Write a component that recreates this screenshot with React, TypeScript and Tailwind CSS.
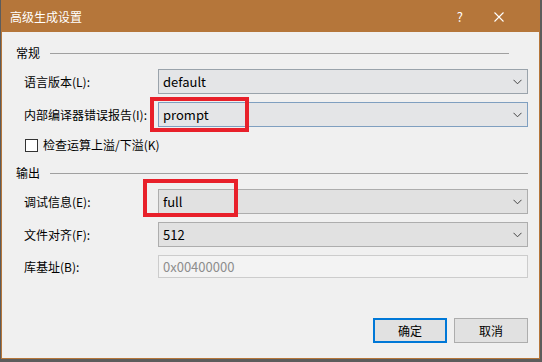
import React from "react";

const font = { fontFamily: '"Noto Sans CJK SC", "Noto Sans", sans-serif' };

function Chevron() {
  return (
    <svg className="absolute right-[5px] top-1/2 -translate-y-1/2" width="9" height="6" viewBox="0 0 9 6">
      <path d="M0.5 0.8 L4.5 4.8 L8.5 0.8" fill="none" stroke="#444" strokeWidth="1" />
    </svg>
  );
}

function Select({ value, border, bg }: { value: string; border: string; bg: string }) {
  return (
    <div className={`relative w-[370px] h-[25px] border ${border} ${bg} flex items-center pl-[4px] text-[13px] text-black`}>
      <span>{value}</span>
      <Chevron />
    </div>
  );
}

function Row({ label, children }: { label: string; children: React.ReactNode }) {
  return (
    <div className="flex items-center mt-[8px] pl-[22px]">
      <div className="w-[134px] text-[12px] text-black leading-none">{label}</div>
      {children}
    </div>
  );
}

function Header({ text, lineW, mt }: { text: string; lineW: string; mt: string }) {
  return (
    <div className={`flex items-center h-[16px] pl-[14px] ${mt}`}>
      <span className="text-[12px] text-black w-[34px] leading-none">{text}</span>
      <div className={`h-px bg-[#a0a0a0] ${lineW}`} />
    </div>
  );
}

export default function App() {
  return (
    <div className="relative w-[542px] h-[362px] bg-[#5c5c5c] pl-[1px] overflow-hidden" style={font}>
      <div className="w-[539px] h-[359px] border border-[#b5763a] bg-[#f0f0f0] flex flex-col">
        <div className="h-[31px] bg-[#b5763a] flex items-center text-white text-[12px] pl-[8px] shrink-0">
          <span>高级生成设置</span>
          <span className="ml-auto mr-[31px] text-[13px]">?</span>
          <svg className="mr-[35px]" width="10" height="10" viewBox="0 0 10 10">
            <path d="M0.5 0.5 L9.5 9.5 M9.5 0.5 L0.5 9.5" stroke="#fff" strokeWidth="1.1" />
          </svg>
        </div>
        <Header text="常规" lineW="w-[459px]" mt="mt-[13px]" />
        <Row label="语言版本(L):">
          <Select value="default" border="border-[#9aa3ab]" bg="bg-[#e4e5e7]" />
        </Row>
        <Row label="内部编译器错误报告(I):">
          <Select value="prompt" border="border-[#7f9fc0]" bg="bg-[#e4e5e7]" />
        </Row>
        <div className="flex items-center h-[18px] mt-[9px] pl-[23px]">
          <div className="w-[13px] h-[13px] border border-[#333] bg-white" />
          <span className="ml-[5px] text-[12px] text-black leading-none">检查运算上溢/下溢(K)</span>
        </div>
        <Header text="输出" lineW="w-[478px]" mt="mt-[11px]" />
        <Row label="调试信息(E):">
          <Select value="full" border="border-[#adadad]" bg="bg-[#e1e1e1]" />
        </Row>
        <Row label="文件对齐(F):">
          <Select value="512" border="border-[#adadad]" bg="bg-[#e1e1e1]" />
        </Row>
        <Row label="库基址(B):">
          <div className="w-[370px] h-[23px] border border-[#cccccc] bg-[#f3f3f3] flex items-center pl-[4px] text-[13px] text-[#8d8d8d]">
            0x00400000
          </div>
        </Row>
        <div className="flex justify-end gap-[7px] pr-[11px] mt-[40px]">
          <button className="w-[74px] h-[25px] border-2 border-[#0078d7] bg-[#e1e1e1] text-[12px] text-black">确定</button>
          <button className="w-[74px] h-[25px] border border-[#adadad] bg-[#e1e1e1] text-[12px] text-black">取消</button>
        </div>
      </div>
      <div className="absolute left-[150px] top-[97px] w-[99px] h-[35px] border-4 border-[#e8202a]" />
      <div className="absolute left-[143px] top-[179px] w-[95px] h-[38px] border-4 border-[#e8202a]" />
    </div>
  );
}
